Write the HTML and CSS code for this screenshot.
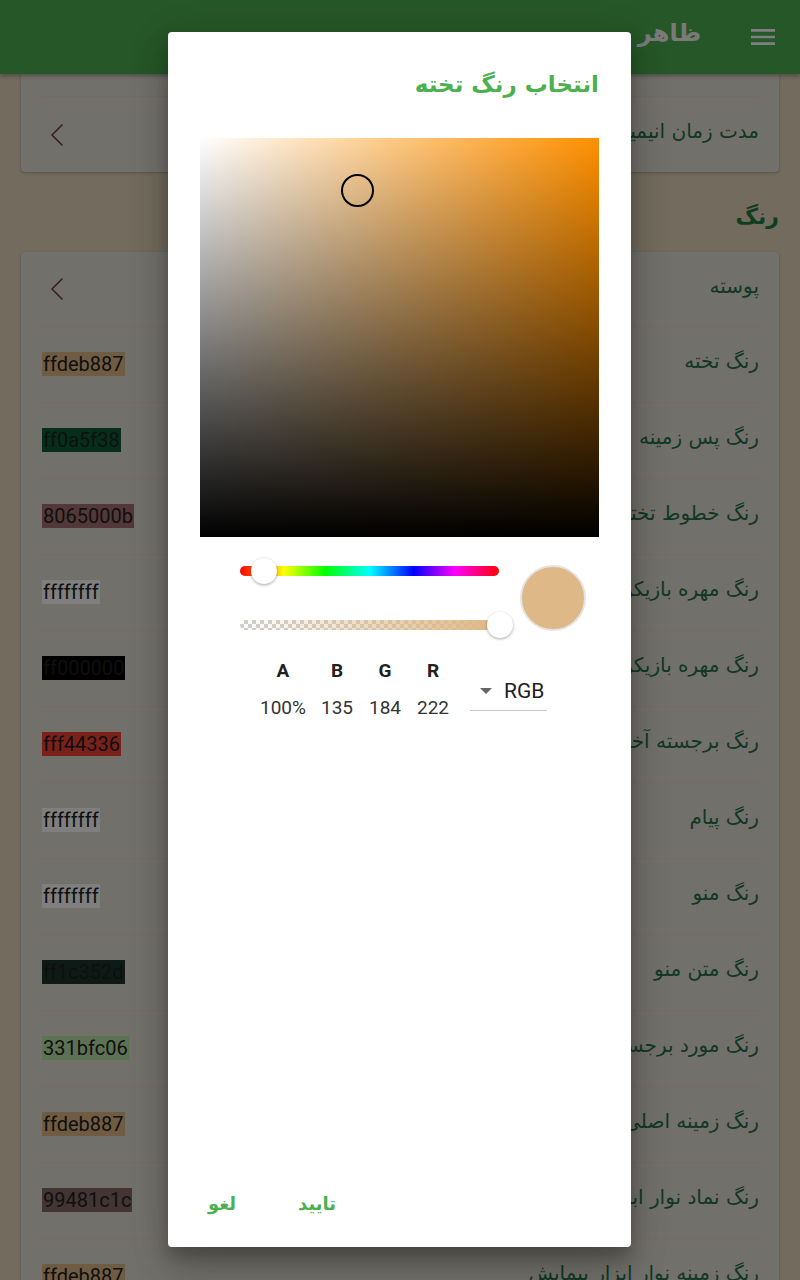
FILE: index.html
```html
<!DOCTYPE html>
<html lang="fa" dir="rtl">
<head>
<meta charset="utf-8">
<title>ظاهر</title>
<link rel="stylesheet" href="styles.css">
</head>
<body>
<div class="app">
  <header class="appbar">
    <svg class="menu-icon" viewBox="0 0 24 24" width="32" height="32" aria-hidden="true">
      <path fill="#ffffff" d="M3 18h18v-2H3v2zm0-5h18v-2H3v2zm0-7v2h18V6H3z"/>
    </svg>
    <h1 class="appbar-title">ظاهر</h1>
  </header>
  <div class="scroll">
    <div class="scroll-inner">
      <section class="card">
        <div class="row"><span class="label">سرعت انیمیشن</span></div>
        <div class="row">
          <span class="label">مدت زمان انیمیشن</span>
          <svg class="chevron" viewBox="0 0 14 24" width="14" height="24" aria-hidden="true"><path d="M12.5 1.5 L2 12 L12.5 22.5" fill="none" stroke="#6a3f3f" stroke-width="1.5"/></svg>
        </div>
      </section>

      <h2 class="section-title">رنگ</h2>

      <section class="card">
        <div class="row">
          <span class="label">پوسته</span>
          <svg class="chevron" viewBox="0 0 14 24" width="14" height="24" aria-hidden="true"><path d="M12.5 1.5 L2 12 L12.5 22.5" fill="none" stroke="#6a3f3f" stroke-width="1.5"/></svg>
        </div>
        <div class="row"><span class="label">رنگ تخته</span><span class="value" style="background:#deb887">ffdeb887</span></div>
        <div class="row"><span class="label">رنگ پس زمینه</span><span class="value" style="background:#0a5f38">ff0a5f38</span></div>
        <div class="row"><span class="label">رنگ خطوط تخته</span><span class="value" style="background:rgba(101,0,11,0.5)">8065000b</span></div>
        <div class="row"><span class="label">رنگ مهره بازیکن اول</span><span class="value" style="background:#ffffff">ffffffff</span></div>
        <div class="row"><span class="label">رنگ مهره بازیکن دوم</span><span class="value" style="background:#000000">ff000000</span></div>
        <div class="row"><span class="label">رنگ برجسته آخرین حرکت</span><span class="value" style="background:#f44336">fff44336</span></div>
        <div class="row"><span class="label">رنگ پیام</span><span class="value" style="background:#ffffff">ffffffff</span></div>
        <div class="row"><span class="label">رنگ منو</span><span class="value" style="background:#ffffff">ffffffff</span></div>
        <div class="row"><span class="label">رنگ متن منو</span><span class="value" style="background:#1c352d">ff1c352d</span></div>
        <div class="row"><span class="label">رنگ مورد برجسته</span><span class="value" style="background:rgba(27,252,6,0.2)">331bfc06</span></div>
        <div class="row"><span class="label">رنگ زمینه اصلی</span><span class="value" style="background:#deb887">ffdeb887</span></div>
        <div class="row"><span class="label">رنگ نماد نوار ابزار</span><span class="value" style="background:rgba(72,28,28,0.6)">99481c1c</span></div>
        <div class="row"><span class="label">رنگ زمینه نوار ابزار پیمایش</span><span class="value" style="background:#deb887">ffdeb887</span></div>
      </section>
    </div>
  </div>
</div>

<div class="scrim"></div>

<div class="dialog" role="dialog">
  <h2 class="dialog-title">انتخاب رنگ تخته</h2>

  <div class="sv-square">
    <span class="sv-cursor"></span>
  </div>

  <div class="controls">
    <div class="sliders">
      <div class="slider">
        <div class="track track-hue"></div>
        <span class="thumb thumb-hue"></span>
      </div>
      <div class="slider">
        <div class="track track-alpha"></div>
        <span class="thumb thumb-alpha"></span>
      </div>
    </div>
    <div class="preview"></div>
  </div>

  <div class="channels">
    <div class="col col-a"><span class="col-label">A</span><span class="col-value">100%</span></div>
    <div class="col"><span class="col-label">B</span><span class="col-value">135</span></div>
    <div class="col"><span class="col-label">G</span><span class="col-value">184</span></div>
    <div class="col"><span class="col-label">R</span><span class="col-value">222</span></div>
    <div class="dropdown"><span class="caret"></span><span class="dropdown-text">RGB</span></div>
  </div>

  <div class="actions">
    <button class="btn btn-ok">تایید</button>
    <button class="btn btn-cancel">لغو</button>
  </div>
</div>
</body>
</html>
```

FILE: styles.css
```css
html, body {
  margin: 0;
  padding: 0;
}

body {
  width: 800px;
  height: 1280px;
  overflow: hidden;
  background: #e6d6bc;
  font-family: "DejaVu Sans", "Noto Sans", sans-serif;
  position: relative;
}

.app {
  height: 1280px;
  display: flex;
  flex-direction: column;
}

/* App bar */
.appbar {
  height: 74px;
  flex: none;
  background: #4caf50;
  display: flex;
  align-items: center;
  padding-right: 21px;
  gap: 46px;
  position: relative;
  z-index: 1;
  box-shadow: 0 2px 4px rgba(0, 0, 0, 0.3);
}

.menu-icon {
  display: block;
  flex: none;
}

.appbar-title {
  margin: 0 0 8px;
  font-size: 24px;
  font-weight: bold;
  color: #f4f4f4;
  line-height: 32px;
}

/* Scrolled list */
.scroll {
  flex: 1;
  overflow: hidden;
}

.scroll-inner {
  margin-top: -52px;
  padding: 0 21px;
}

.card {
  background: #e4e0d4;
  border-radius: 4px;
  padding: 0 21px;
  box-shadow: 0 1px 3px rgba(0, 0, 0, 0.25);
}

.row {
  height: 75px;
  display: flex;
  align-items: center;
  justify-content: space-between;
  border-top: 1px solid #f2d0d0;
}

.row:first-child {
  border-top: none;
  height: 74px;
}

.label {
  font-size: 20px;
  line-height: 28px;
  margin-bottom: 7px;
  margin-right: -1px;
  color: #24704a;
  white-space: nowrap;
}

.value {
  font-family: Roboto, "Liberation Sans", sans-serif;
  font-size: 20px;
  line-height: 24px;
  color: #1e1e1e;
  direction: ltr;
  padding: 0 1px;
  margin-bottom: 2px;
}

.chevron {
  display: block;
  margin-left: 8px;
}

.section-title {
  margin: 0;
  padding: 30px 0 20px;
  font-size: 22px;
  line-height: 30px;
  font-weight: bold;
  color: #1f7a42;
}

/* Scrim */
.scrim {
  position: absolute;
  inset: 0;
  background: rgba(0, 0, 0, 0.5);
  z-index: 5;
}

/* Dialog */
.dialog {
  position: absolute;
  left: 168px;
  top: 32px;
  width: 463px;
  height: 1215px;
  box-sizing: border-box;
  padding: 36px 32px 20px;
  background: #ffffff;
  border-radius: 4px;
  z-index: 6;
  display: flex;
  flex-direction: column;
  box-shadow: 0 11px 15px rgba(0, 0, 0, 0.2), 0 24px 38px rgba(0, 0, 0, 0.14), 0 9px 46px rgba(0, 0, 0, 0.12);
}

.dialog-title {
  margin: 0;
  font-size: 23px;
  line-height: 32px;
  font-weight: bold;
  color: #4caf50;
}

.sv-square {
  position: relative;
  margin-top: 38px;
  width: 399px;
  height: 399px;
  background:
    linear-gradient(to top, #000000, rgba(0, 0, 0, 0)),
    linear-gradient(to right, #ffffff, rgba(255, 255, 255, 0)),
    #ff9000;
}

.sv-cursor {
  position: absolute;
  left: 141px;
  top: 36px;
  width: 33px;
  height: 33px;
  box-sizing: border-box;
  border: 2px solid #000000;
  border-radius: 50%;
}

.controls {
  direction: ltr;
  margin-top: 21px;
  display: flex;
  align-items: center;
  padding-left: 40px;
  gap: 21px;
}

.sliders {
  width: 259px;
  display: flex;
  flex-direction: column;
  gap: 28px;
}

.slider {
  position: relative;
  height: 26px;
}

.track {
  position: absolute;
  left: 0;
  right: 0;
  top: 8px;
  height: 10px;
  border-radius: 5px;
}

.track-hue {
  background: linear-gradient(to right, #ff0000 0%, #ffff00 17%, #00ff00 33%, #00ffff 50%, #0000ff 67%, #ff00ff 83%, #ff0000 100%);
}

.track-alpha {
  right: 8px;
  background:
    linear-gradient(to right, rgba(222, 184, 135, 0), #deb887),
    repeating-conic-gradient(#cfcfcf 0 25%, #ffffff 0 50%) 0 0 / 8px 8px;
}

.thumb {
  position: absolute;
  top: 0;
  width: 26px;
  height: 26px;
  border-radius: 50%;
  background: #ffffff;
  box-shadow: 0 1px 3px rgba(0, 0, 0, 0.35);
}

.thumb-hue {
  left: 11px;
}

.thumb-alpha {
  left: 247px;
}

.preview {
  width: 66px;
  height: 66px;
  box-sizing: border-box;
  border-radius: 50%;
  background: #deb887;
  border: 2px solid #e4e4e4;
  flex: none;
}

.channels {
  direction: ltr;
  margin-top: 21px;
  display: flex;
  align-items: flex-start;
  padding-left: 53px;
}

.col {
  width: 48px;
  display: flex;
  flex-direction: column;
  align-items: center;
  font-family: Roboto, "Liberation Sans", sans-serif;
}

.col-a {
  width: 60px;
}

.col-label {
  font-size: 19px;
  line-height: 24px;
  font-weight: bold;
  color: #212121;
}

.col-value {
  margin-top: 13px;
  font-size: 19px;
  line-height: 24px;
  color: #333333;
}

.dropdown {
  margin-left: 13px;
  margin-top: 12px;
  width: 77px;
  height: 40px;
  box-sizing: border-box;
  border-bottom: 1px solid #c8c8c8;
  display: flex;
  align-items: center;
  font-family: Roboto, "Liberation Sans", sans-serif;
}

.caret {
  margin-left: 10px;
  width: 0;
  height: 0;
  border-left: 6px solid transparent;
  border-right: 6px solid transparent;
  border-top: 6px solid #666666;
}

.dropdown-text {
  margin-left: 12px;
  font-size: 21px;
  color: #212121;
}

.actions {
  margin-top: auto;
  display: flex;
  justify-content: flex-end;
  gap: 33px;
}

.btn {
  height: 48px;
  border: none;
  background: transparent;
  padding: 0;
  font-family: "DejaVu Sans", sans-serif;
  font-size: 18px;
  font-weight: bold;
  color: #4caf50;
}

.btn-ok {
  width: 80px;
}

.btn-cancel {
  width: 44px;
}
```
